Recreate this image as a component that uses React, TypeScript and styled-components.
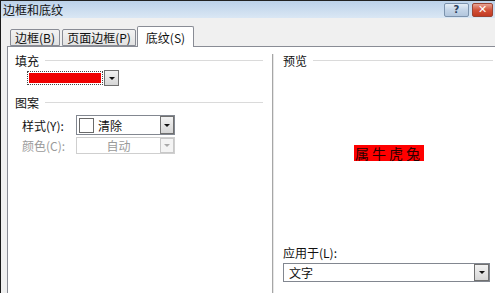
import React from "react";
import styled, { createGlobalStyle } from "styled-components";

const Global = createGlobalStyle`
  html, body { margin: 0; padding: 0; background: #fff; }
  body {
    font-family: "Noto Sans CJK SC", "Noto Sans", sans-serif;
    font-size: 12px;
    color: #000;
  }
  * { box-sizing: border-box; }
`;

const Window = styled.div`
  width: 495px;
  height: 293px;
  overflow: hidden;
  border-left: 1px solid #1a1a1a;
  border-top: 1px solid #222;
  background: #f0f0f0;
  display: flex;
  flex-direction: column;
`;

const TitleBar = styled.div`
  height: 17px;
  flex: none;
  display: flex;
  align-items: center;
  background: linear-gradient(#bcd2ea, #dae7f4);
  padding: 0 2px 0 2px;
`;

const Title = styled.div`
  flex: 1;
  font-size: 12px;
  line-height: 17px;
  color: #111;
`;

const CaptionButton = styled.div<{ $close?: boolean }>`
  width: ${(p) => (p.$close ? 21 : 25)}px;
  height: 14px;
  margin-left: ${(p) => (p.$close ? 3 : 0)}px;
  border: 1px solid ${(p) => (p.$close ? "#9a4434" : "#7c93ad")};
  border-radius: 2px;
  background: ${(p) =>
    p.$close
      ? "linear-gradient(#e8a494, #d2523a 50%, #c23a22)"
      : "linear-gradient(#e4edf6, #c3d4e7 50%, #b2c6dd)"};
  display: flex;
  align-items: center;
  justify-content: center;
  color: ${(p) => (p.$close ? "#fff" : "#2b3f5c")};
  font-family: "DejaVu Sans", sans-serif;
  font-weight: bold;
  font-size: ${(p) => (p.$close ? 11 : 10)}px;
  line-height: 1;
`;

const TabRow = styled.div`
  height: 28px;
  flex: none;
  display: flex;
  align-items: flex-end;
  padding-left: 9px;
  position: relative;
  z-index: 1;
`;

const Tab = styled.div<{ $w: number; $active?: boolean; $gap: number }>`
  width: ${(p) => p.$w}px;
  height: ${(p) => (p.$active ? 21 : 17)}px;
  margin-right: ${(p) => p.$gap}px;
  margin-bottom: ${(p) => (p.$active ? -1 : 0)}px;
  border: 1px solid #898c95;
  border-bottom: ${(p) => (p.$active ? "none" : "1px solid #898c95")};
  border-radius: 2px 2px 0 0;
  background: ${(p) => (p.$active ? "#fff" : "linear-gradient(#f3f3f3, #e2e2e2)")};
  display: flex;
  align-items: center;
  justify-content: center;
  font-size: 12px;
  color: #111;
  white-space: nowrap;
`;

const Panel = styled.div`
  flex: 1;
  margin-left: 6px;
  border-top: 1px solid #898c95;
  border-left: 1px solid #898c95;
  background: #fff;
  display: flex;
  min-height: 0;
`;

const LeftCol = styled.div`
  width: 264px;
  flex: none;
  padding: 6px 9px 0 7px;
  display: flex;
  flex-direction: column;
`;

const Header = styled.div<{ $mt?: number }>`
  height: 14px;
  margin-top: ${(p) => p.$mt ?? 0}px;
  display: flex;
  align-items: center;
  font-size: 12px;
  color: #111;
  &::after {
    content: "";
    flex: 1;
    height: 1px;
    margin-left: 6px;
    background: #dadada;
  }
`;

const ColorRow = styled.div`
  margin: 3px 0 0 12px;
  display: flex;
  align-items: center;
`;

const Swatch = styled.div`
  width: 76px;
  height: 14px;
  border: 1px dotted #444;
  padding: 1px;
  &::before {
    content: "";
    display: block;
    width: 100%;
    height: 100%;
    background: #f00000;
  }
`;

const DropButton = styled.div<{ $disabled?: boolean; $w?: number; $h?: number }>`
  width: ${(p) => p.$w ?? 15}px;
  height: ${(p) => p.$h ?? 16}px;
  margin-left: 1px;
  flex: none;
  border: 1px solid ${(p) => (p.$disabled ? "#c8c8c8" : "#707070")};
  background: ${(p) => (p.$disabled ? "#f4f4f4" : "linear-gradient(#f2f2f2, #d6d6d6)")};
  display: flex;
  align-items: center;
  justify-content: center;
  &::before {
    content: "";
    border-left: 3px solid transparent;
    border-right: 3px solid transparent;
    border-top: 3px solid ${(p) => (p.$disabled ? "#aaa" : "#111")};
  }
`;

const FieldRow = styled.div<{ $mt: number; $h: number }>`
  margin: ${(p) => p.$mt}px 0 0 7px;
  height: ${(p) => p.$h}px;
  display: flex;
  align-items: center;
`;

const FieldLabel = styled.div<{ $disabled?: boolean }>`
  width: 54px;
  font-size: 12px;
  color: ${(p) => (p.$disabled ? "#9a9a9a" : "#111")};
  white-space: nowrap;
`;

const Select = styled.div<{ $disabled?: boolean; $w: number; $h: number }>`
  width: ${(p) => p.$w}px;
  height: ${(p) => p.$h}px;
  border: 1px solid ${(p) => (p.$disabled ? "#cfcfcf" : "#828790")};
  background: #fff;
  display: flex;
  align-items: center;
  padding: 0 0 0 1px;
  font-size: 12px;
  color: ${(p) => (p.$disabled ? "#9a9a9a" : "#111")};
`;

const SelectText = styled.div<{ $center?: boolean }>`
  flex: 1;
  text-align: ${(p) => (p.$center ? "center" : "left")};
  padding-left: ${(p) => (p.$center ? 0 : 4)}px;
`;

const PatternBox = styled.div`
  width: 15px;
  height: 15px;
  margin-left: 1px;
  border: 1px solid #6a6a6a;
  background: #fff;
  flex: none;
`;

const Divider = styled.div`
  width: 2px;
  margin-top: 7px;
  flex: none;
  border-left: 1px solid #a6a6a6;
  border-right: 1px solid #e6e6e6;
`;

const RightCol = styled.div`
  width: 219px;
  flex: none;
  padding: 6px 0 11px 9px;
  display: flex;
  flex-direction: column;
`;

const PreviewArea = styled.div`
  flex: 1;
  display: flex;
  align-items: center;
  justify-content: center;
  padding: 0 0 6px 0;
`;

const PreviewText = styled.div`
  background: #ff0000;
  color: #2a0000;
  font-size: 14px;
  line-height: 16px;
  height: 16px;
  padding: 0 1px;
  letter-spacing: 3px;
  margin-left: 2px;
`;

const ApplyLabel = styled.div`
  font-size: 12px;
  color: #111;
  margin-bottom: 2px;
`;

const App: React.FC = () => (
  <>
    <Global />
    <Window>
      <TitleBar>
        <Title>边框和底纹</Title>
        <CaptionButton>?</CaptionButton>
        <CaptionButton $close>✕</CaptionButton>
      </TitleBar>
      <TabRow>
        <Tab $w={50} $gap={2}>边框(B)</Tab>
        <Tab $w={74} $gap={1}>页面边框(P)</Tab>
        <Tab $w={57} $gap={0} $active>底纹(S)</Tab>
      </TabRow>
      <Panel>
        <LeftCol>
          <Header>填充</Header>
          <ColorRow>
            <Swatch />
            <DropButton />
          </ColorRow>
          <Header $mt={9}>图案</Header>
          <FieldRow $mt={6} $h={20}>
            <FieldLabel>样式(Y):</FieldLabel>
            <Select $w={99} $h={20}>
              <PatternBox />
              <SelectText>清除</SelectText>
              <DropButton $w={14} $h={18} />
            </Select>
          </FieldRow>
          <FieldRow $mt={2} $h={17}>
            <FieldLabel $disabled>颜色(C):</FieldLabel>
            <Select $w={99} $h={17} $disabled>
              <SelectText $center>自动</SelectText>
              <DropButton $w={14} $h={15} $disabled />
            </Select>
          </FieldRow>
        </LeftCol>
        <Divider />
        <RightCol>
          <Header>预览</Header>
          <PreviewArea>
            <PreviewText>属牛虎兔</PreviewText>
          </PreviewArea>
          <ApplyLabel>应用于(L):</ApplyLabel>
          <Select $w={207} $h={19}>
            <SelectText>文字</SelectText>
            <DropButton $w={15} $h={17} />
          </Select>
        </RightCol>
      </Panel>
    </Window>
  </>
);

export default App;
